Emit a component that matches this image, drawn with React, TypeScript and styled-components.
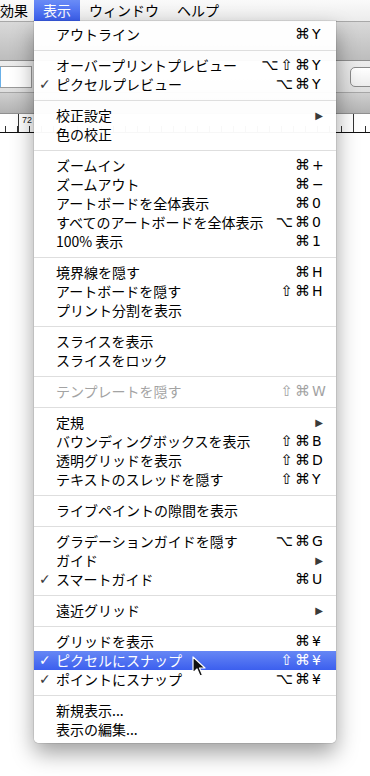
import React from "react";
import styled, { createGlobalStyle } from "styled-components";

const Global = createGlobalStyle`
  html, body { margin: 0; padding: 0; background: #fff; }
  body { width: 370px; height: 776px; overflow: hidden; }
  #root { position: relative; width: 370px; height: 776px; }
`;

const FONT = `"Noto Sans CJK JP", "DejaVu Sans", sans-serif`;
const SYM = `"DejaVu Sans", "Noto Sans CJK JP", sans-serif`;

const Screen = styled.div`
  position: relative;
  width: 370px;
  height: 776px;
  overflow: hidden;
  font-family: ${FONT};
  background: #fff;
  display: flex;
  flex-direction: column;
`;

const MenuBar = styled.div`
  height: 21px;
  display: flex;
  align-items: stretch;
  background: linear-gradient(#fafafa, #ececec);
  border-bottom: 1px solid #a8a8a8;
  font-size: 14px;
  color: #000;
`;

const MenuTitle = styled.div<{ $active?: boolean; $first?: boolean }>`
  padding: ${(p) => (p.$first ? "0 6px 0 0" : "0 9px")};
  display: flex;
  align-items: center;
  line-height: 21px;
  white-space: nowrap;
  color: ${(p) => (p.$active ? "#fff" : "#000")};
  background: ${(p) =>
    p.$active ? "linear-gradient(#6a8cf6, #3a5eee)" : "transparent"};
`;

const Toolbar = styled.div`
  height: 38px;
  background: linear-gradient(#d9d9d9, #bdbdbd);
  border-bottom: 1px solid #8e8e8e;
`;

const ControlBar = styled.div`
  height: 31px;
  background: linear-gradient(#ececec, #dedede);
  border-bottom: 1px solid #a6a6a6;
  display: flex;
  align-items: center;
  justify-content: space-between;
`;

const Field = styled.div`
  width: 30px;
  height: 20px;
  background: #fff;
  border: 1px solid #9a9a9a;
  border-left: 3px solid #69b0e8;
  margin-left: -2px;
`;

const RoundButton = styled.div`
  width: 40px;
  height: 18px;
  border: 1px solid #8a8a8a;
  border-radius: 5px;
  background: linear-gradient(#ffffff, #ececec);
  margin-right: -22px;
`;

const TabBar = styled.div`
  height: 20px;
  background: linear-gradient(#cfcfcf, #b3b3b3);
  border-bottom: 1px solid #8f8f8f;
`;

const Ruler = styled.div`
  position: relative;
  height: 18px;
  background:
    repeating-linear-gradient(90deg, transparent 0 5px, #333 5px 6px, transparent 6px 12px) 0 12px / 100% 6px no-repeat,
    #fff;
  border-bottom: 1px solid #111;
`;

const RulerMajor = styled.div<{ $x: number }>`
  position: absolute;
  left: ${(p) => p.$x}px;
  top: 0;
  bottom: 0;
  width: 1px;
  background: #333;
`;

const RulerLabel = styled.span`
  position: absolute;
  left: 22px;
  top: 1px;
  font-family: "Liberation Sans", sans-serif;
  font-size: 9px;
  color: #222;
`;

const Canvas = styled.div`
  flex: 1;
  background: #fff;
`;

const Menu = styled.div`
  position: absolute;
  left: 34px;
  top: 21px;
  width: 302px;
  padding: 4px 0;
  background: rgba(255, 255, 255, 0.97);
  border-radius: 0 0 5px 5px;
  box-shadow: 0 10px 22px rgba(0, 0, 0, 0.38), 0 0 0 1px rgba(0, 0, 0, 0.08);
  font-family: ${FONT};
  font-size: 14px;
`;

const Row = styled.div<{ $hl?: boolean; $dis?: boolean }>`
  position: relative;
  height: 19px;
  display: flex;
  align-items: center;
  padding: 0 13px 0 22px;
  line-height: 19px;
  color: ${(p) => (p.$hl ? "#fff" : p.$dis ? "#a3a3a3" : "#000")};
  background: ${(p) =>
    p.$hl ? "linear-gradient(#6687f5, #3c5fee)" : "transparent"};
`;

const Check = styled.span<{ $hl?: boolean }>`
  position: absolute;
  left: 5px;
  top: 0;
  font-family: ${SYM};
  font-size: 14px;
  font-weight: bold;
  color: ${(p) => (p.$hl ? "#fff" : "#3a3a3a")};
`;

const Label = styled.span`
  flex: 1;
  white-space: nowrap;
`;

const Shortcut = styled.span`
  display: flex;
  align-items: center;
  font-family: ${SYM};
`;

const Mods = styled.span`
  font-size: 15px;
  text-align: right;
  letter-spacing: 2px;
`;

const Key = styled.span`
  font-size: 14px;
  width: 11px;
  text-align: left;
`;

const Arrow = styled.span`
  font-family: ${SYM};
  font-size: 10px;
  color: #3a3a3a;
`;

const Sep = styled.div`
  height: 12px;
  display: flex;
  align-items: center;
  &::after {
    content: "";
    flex: 1;
    height: 1px;
    background: #dedede;
  }
`;

const Cursor = styled.svg`
  position: absolute;
  left: 192px;
  top: 656px;
`;

type Item =
  | { sep: true }
  | {
      label: string;
      mods?: string;
      key?: string;
      check?: boolean;
      sub?: boolean;
      dis?: boolean;
      hl?: boolean;
    };

const items: Item[] = [
  { label: "アウトライン", mods: "⌘", key: "Y" },
  { sep: true },
  { label: "オーバープリントプレビュー", mods: "⌥⇧⌘", key: "Y" },
  { label: "ピクセルプレビュー", mods: "⌥⌘", key: "Y", check: true },
  { sep: true },
  { label: "校正設定", sub: true },
  { label: "色の校正" },
  { sep: true },
  { label: "ズームイン", mods: "⌘", key: "+" },
  { label: "ズームアウト", mods: "⌘", key: "−" },
  { label: "アートボードを全体表示", mods: "⌘", key: "0" },
  { label: "すべてのアートボードを全体表示", mods: "⌥⌘", key: "0" },
  { label: "100% 表示", mods: "⌘", key: "1" },
  { sep: true },
  { label: "境界線を隠す", mods: "⌘", key: "H" },
  { label: "アートボードを隠す", mods: "⇧⌘", key: "H" },
  { label: "プリント分割を表示" },
  { sep: true },
  { label: "スライスを表示" },
  { label: "スライスをロック" },
  { sep: true },
  { label: "テンプレートを隠す", mods: "⇧⌘", key: "W", dis: true },
  { sep: true },
  { label: "定規", sub: true },
  { label: "バウンディングボックスを表示", mods: "⇧⌘", key: "B" },
  { label: "透明グリッドを表示", mods: "⇧⌘", key: "D" },
  { label: "テキストのスレッドを隠す", mods: "⇧⌘", key: "Y" },
  { sep: true },
  { label: "ライブペイントの隙間を表示" },
  { sep: true },
  { label: "グラデーションガイドを隠す", mods: "⌥⌘", key: "G" },
  { label: "ガイド", sub: true },
  { label: "スマートガイド", mods: "⌘", key: "U", check: true },
  { sep: true },
  { label: "遠近グリッド", sub: true },
  { sep: true },
  { label: "グリッドを表示", mods: "⌘", key: "¥" },
  { label: "ピクセルにスナップ", mods: "⇧⌘", key: "¥", check: true, hl: true },
  { label: "ポイントにスナップ", mods: "⌥⌘", key: "¥", check: true },
  { sep: true },
  { label: "新規表示..." },
  { label: "表示の編集..." },
];

export default function App() {
  return (
    <Screen>
      <Global />
      <MenuBar>
        <MenuTitle $first>効果</MenuTitle>
        <MenuTitle $active>表示</MenuTitle>
        <MenuTitle>ウィンドウ</MenuTitle>
        <MenuTitle>ヘルプ</MenuTitle>
      </MenuBar>
      <Toolbar />
      <ControlBar>
        <Field />
        <RoundButton />
      </ControlBar>
      <TabBar />
      <Ruler>
        <RulerMajor $x={18} />
        <RulerLabel>72</RulerLabel>
        <RulerMajor $x={353} />
      </Ruler>
      <Canvas />

      <Menu>
        {items.map((it, i) =>
          "sep" in it ? (
            <Sep key={i} />
          ) : (
            <Row key={i} $hl={it.hl} $dis={it.dis}>
              {it.check && <Check $hl={it.hl}>✓</Check>}
              <Label>{it.label}</Label>
              {it.sub && <Arrow>▶</Arrow>}
              {it.key && (
                <Shortcut>
                  <Mods>{it.mods}</Mods>
                  <Key>{it.key}</Key>
                </Shortcut>
              )}
            </Row>
          )
        )}
      </Menu>

      <Cursor width="14" height="22" viewBox="0 0 14 22">
        <path
          d="M1 1 L1 17 L5 13 L8 20 L10.5 19 L7.5 12 L13 12 Z"
          fill="#111"
          stroke="#fff"
          strokeWidth="1.2"
          strokeLinejoin="round"
        />
      </Cursor>
    </Screen>
  );
}
